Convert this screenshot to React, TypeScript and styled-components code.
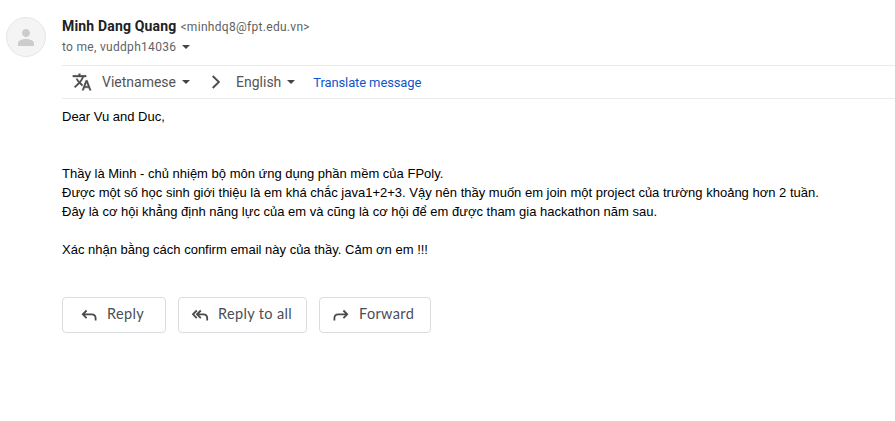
import React from "react";
import styled, { createGlobalStyle } from "styled-components";

const Global = createGlobalStyle`
  * { box-sizing: border-box; }
  body { margin: 0; background: #fff; overflow: hidden; }
`;

const Message = styled.article`
  display: flex;
  width: 895px;
  height: 421px;
  padding: 17px 0 0 6px;
  background: #fff;
  font-family: Roboto, "Liberation Sans", sans-serif;
`;

const Avatar = styled.div`
  flex: none;
  width: 40px;
  height: 40px;
  border: 1px solid #e6e6e6;
  border-radius: 50%;
  background: #f4f4f4;
  display: flex;
  align-items: center;
  justify-content: center;
`;

const Content = styled.div`
  flex: 1;
  margin-left: 16px;
`;

const Sender = styled.div`
  display: flex;
  align-items: baseline;
  gap: 4px;
  height: 20px;
  line-height: 19px;
  white-space: nowrap;
`;

const Name = styled.span`
  font-size: 14px;
  font-weight: 700;
  letter-spacing: 0.17px;
  color: #202124;
`;

const Address = styled.span`
  font-size: 12px;
  letter-spacing: 0.3px;
  color: #5f5f5f;
`;

const Recipients = styled.div`
  display: flex;
  align-items: center;
  gap: 6px;
  height: 20px;
  font-size: 12px;
  letter-spacing: 0.3px;
  color: #5f6368;
`;

const Caret = styled.i`
  border: 4px solid transparent;
  border-top-color: #444;
  border-bottom: 0;
`;

const TranslateBar = styled.div`
  display: flex;
  align-items: center;
  height: 34px;
  margin-top: 8px;
  padding-left: 10px;
  border-top: 1px solid #ebebeb;
  border-bottom: 1px solid #ebebeb;
`;

const Icon = styled.svg`
  display: block;
  flex: none;
`;

const StrokeIcon = styled(Icon)`
  fill: none;
  stroke: #4a4a4a;
  stroke-width: 1.8;
`;

const Language = styled.span<{ $left: number }>`
  display: flex;
  align-items: center;
  gap: 6px;
  margin-left: ${(p) => p.$left}px;
  font-size: 14px;
  color: #555;
`;

const Direction = styled(StrokeIcon)`
  margin-left: 21px;
`;

const TranslateLink = styled.a`
  margin-left: 18px;
  font-size: 13px;
  letter-spacing: -0.12px;
  color: #1155cc;
`;

const Body = styled.div`
  padding-top: 8px;
  font-family: "Liberation Sans", Arial, sans-serif;
  font-size: 13px;
  line-height: 19px;
  color: #000;
  white-space: nowrap;
`;

const Line = styled.div`
  min-height: 19px;
`;

const Actions = styled.div`
  display: flex;
  gap: 12px;
  margin-top: 38px;
`;

const Action = styled.button<{ $width: number; $inset: number }>`
  display: flex;
  align-items: center;
  width: ${(p) => p.$width}px;
  height: 36px;
  padding: 0 0 0 ${(p) => p.$inset}px;
  border: 1px solid #dadce0;
  border-radius: 4px;
  background: #fff;
  font: 400 14.5px Lato, sans-serif;
  letter-spacing: 0.35px;
  color: #4b4e53;
  white-space: nowrap;
`;

const ActionLabel = styled.span<{ $gap: number }>`
  margin-left: ${(p) => p.$gap}px;
  padding-bottom: 3px;
`;

export default function App() {
  return (
    <>
      <Global />
      <Message>
        <Avatar>
          <Icon width="24" height="24" viewBox="0 0 24 24" fill="#cccccc">
            <path d="M12 12c2.21 0 4-1.79 4-4s-1.79-4-4-4-4 1.79-4 4 1.79 4 4 4zm0 2c-2.67 0-8 1.34-8 4v3h16v-3c0-2.66-5.33-4-8-4z" />
          </Icon>
        </Avatar>
        <Content>
          <Sender>
            <Name>Minh Dang Quang</Name>
            <Address>&lt;minhdq8@fpt.edu.vn&gt;</Address>
          </Sender>
          <Recipients>to me, vuddph14036 <Caret /></Recipients>
          <TranslateBar>
            <Icon width="20" height="20" viewBox="0 0 24 24" fill="#4a4a4a" stroke="#4a4a4a" strokeWidth="0.4">
              <path d="M12.87 15.07l-2.54-2.51.03-.03c1.74-1.94 2.98-4.17 3.71-6.53H17V4h-7V2H8v2H1v1.99h11.17C11.5 7.92 10.44 9.75 9 11.35 8.07 10.32 7.3 9.19 6.69 8h-2c.73 1.63 1.73 3.17 2.98 4.56l-5.09 5.02L4 19l5-5 3.11 3.11.76-2.04zM18.5 10h-2L12 22h2l1.12-3h4.75L21 22h2l-4.5-12zm-2.62 7l1.62-4.33L19.12 17h-3.24z" />
            </Icon>
            <Language $left={10}>Vietnamese <Caret /></Language>
            <Direction width="10" height="14" viewBox="0 0 10 14">
              <path d="M1.7 1L7.9 7 1.7 13" />
            </Direction>
            <Language $left={15}>English <Caret /></Language>
            <TranslateLink>Translate message</TranslateLink>
          </TranslateBar>
          <Body>
            <Line>Dear Vu and Duc,</Line>
            <Line />
            <Line />
            <Line>Thầy là Minh - chủ nhiệm bộ môn ứng dụng phần mềm của FPoly.</Line>
            <Line>Được một số học sinh giới thiệu là em khá chắc java1+2+3. Vậy nên thầy muốn em join một project của trường khoảng hơn 2 tuần.</Line>
            <Line>Đây là cơ hội khẳng định năng lực của em và cũng là cơ hội để em được tham gia hackathon năm sau.</Line>
            <Line />
            <Line>Xác nhận bằng cách confirm email này của thầy. Cảm ơn em !!!</Line>
          </Body>
          <Actions>
            <Action $width={104} $inset={18}>
              <StrokeIcon width="16" height="12" viewBox="0 -0.7 16 12">
                <path d="M5.6 .8L1.8 4.6 5.6 8.4M1.8 4.6H10.6Q14.6 4.6 14.6 8.4V10.8" />
              </StrokeIcon>
              <ActionLabel $gap={10}>Reply</ActionLabel>
            </Action>
            <Action $width={129} $inset={12}>
              <StrokeIcon width="18" height="12" viewBox="0 -0.7 18 12">
                <path d="M5.8 .8L2 4.6 5.8 8.4M9.8 .8L6 4.6 9.8 8.4M6 4.6H12.4Q16.2 4.6 16.2 8.4V10.8" />
              </StrokeIcon>
              <ActionLabel $gap={9}>Reply to all</ActionLabel>
            </Action>
            <Action $width={112} $inset={13}>
              <StrokeIcon width="16" height="12" viewBox="0 -0.7 16 12">
                <path d="M10.4 .8L14.2 4.6 10.4 8.4M14.2 4.6H5.2Q1.4 4.6 1.4 8.4V10.8" />
              </StrokeIcon>
              <ActionLabel $gap={10}>Forward</ActionLabel>
            </Action>
          </Actions>
        </Content>
      </Message>
    </>
  );
}
